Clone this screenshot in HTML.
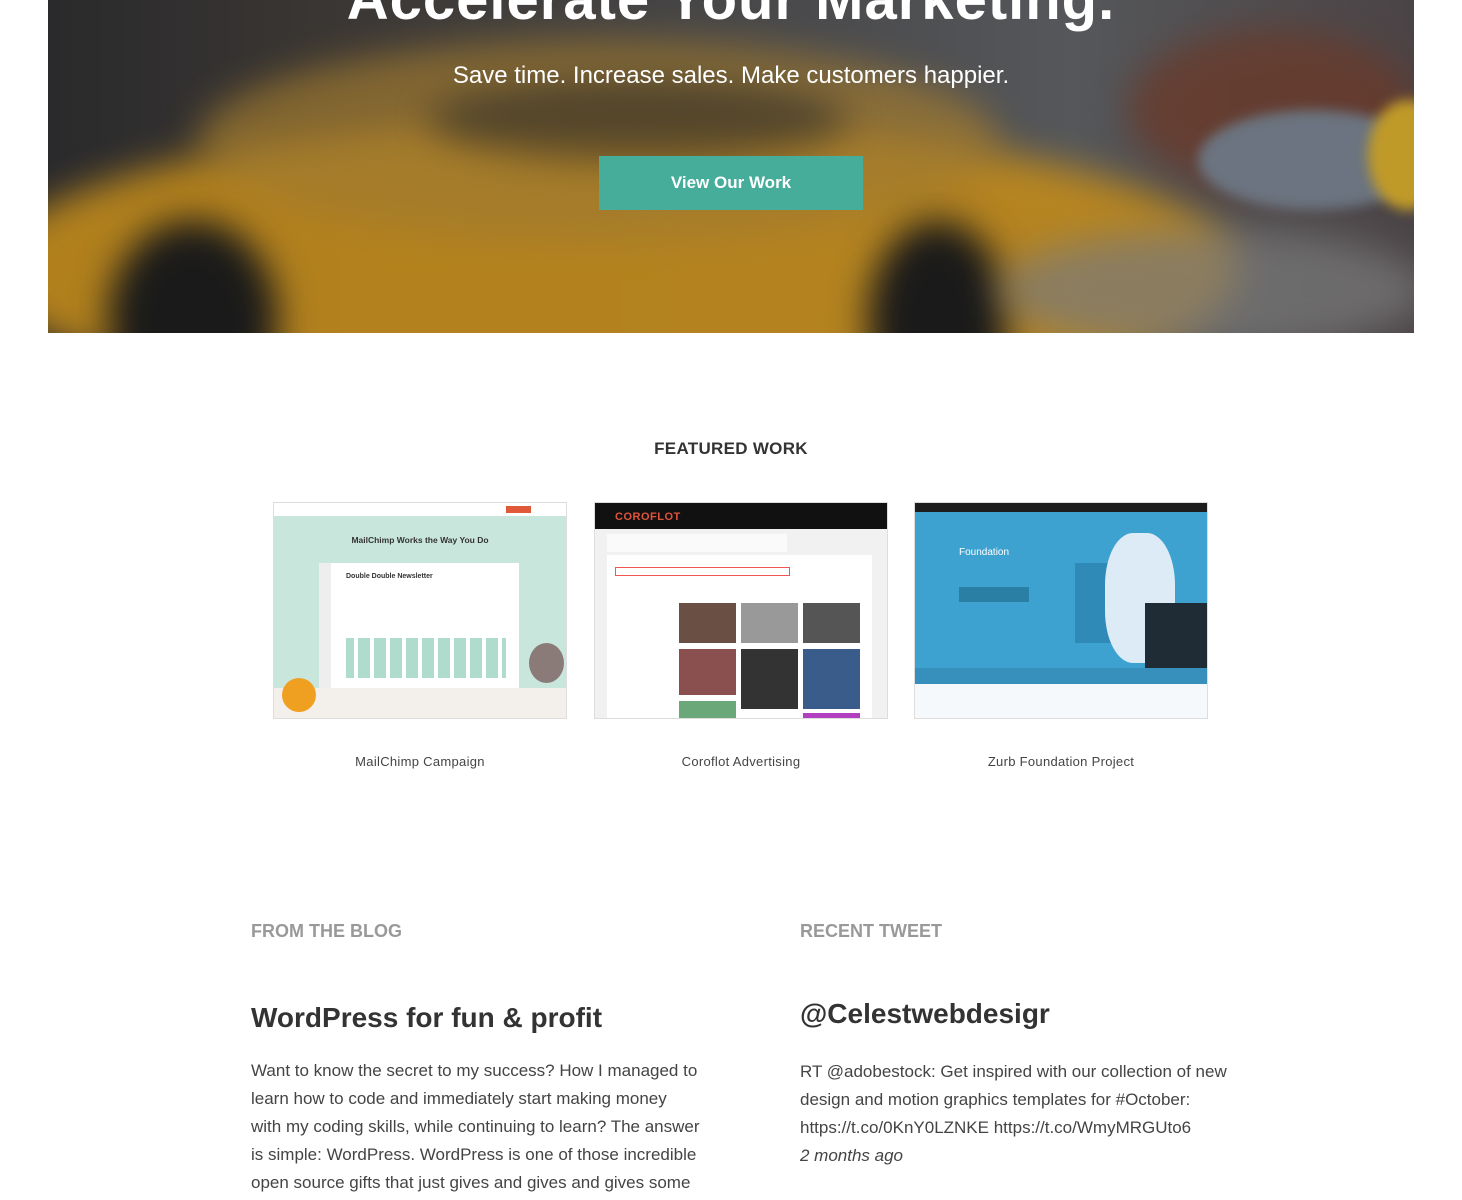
<!DOCTYPE html>
<html><head><meta charset="utf-8">
<style>
*{margin:0;padding:0;box-sizing:border-box}
body{width:1462px;height:1200px;overflow:hidden;background:#fff;font-family:"Liberation Sans",sans-serif;color:#333;position:relative}
.hero{position:absolute;left:48px;top:0;width:1366px;height:333px;overflow:hidden;
background:linear-gradient(90deg,#2a2a2c 0%,#3a3633 20%,#4a4a4c 55%,#55575a 75%,#4b4446 100%)}
.hero .b{position:absolute;border-radius:50%;filter:blur(18px)}
.h1{position:absolute;left:0;right:0;top:-34px;text-align:center;color:#fff;font-weight:bold;font-size:58px;letter-spacing:1px}
.sub{position:absolute;left:0;right:0;top:62px;text-align:center;color:#fff;font-size:24px}
.btn{position:absolute;left:551px;top:156px;width:264px;height:54px;background:#46ad9b;color:#fff;font-weight:bold;font-size:17px;text-align:center;line-height:54px}
h2.fw{position:absolute;left:0;width:1462px;top:439px;text-align:center;font-size:17px;font-weight:bold;color:#333;letter-spacing:.3px}
.th{position:absolute;top:502px;width:294px;height:217px;border:1px solid #ddd;overflow:hidden}
.cap{position:absolute;top:754px;width:294px;text-align:center;font-size:13px;color:#444;letter-spacing:.3px}
.lbl{position:absolute;top:921px;font-size:18px;font-weight:bold;color:#999}
.tt{position:absolute;font-size:28px;font-weight:bold;color:#333}
.p{position:absolute;font-size:17px;line-height:28px;color:#444;white-space:nowrap}
</style></head><body>
<div class="hero">
 <div class="b" style="left:-60px;top:120px;width:1250px;height:300px;background:#c08a1c;opacity:.9"></div>
 <div class="b" style="left:150px;top:40px;width:800px;height:200px;background:#a07a30;opacity:.7"></div>
 <div class="b" style="left:380px;top:80px;width:420px;height:80px;background:#2c2a28;opacity:.6"></div>
 <div class="b" style="left:60px;top:220px;width:170px;height:200px;background:#1a1a1a"></div>
 <div class="b" style="left:820px;top:220px;width:140px;height:200px;background:#1a1a1a"></div>
 <div class="b" style="left:1080px;top:30px;width:290px;height:160px;background:#6a3a2a;opacity:.8"></div>
 <div class="b" style="left:1150px;top:110px;width:230px;height:100px;background:#6b7480;filter:blur(6px)"></div>
 <div class="b" style="left:1320px;top:100px;width:80px;height:110px;background:#c09a28;filter:blur(6px)"></div>
 <div class="b" style="left:950px;top:230px;width:430px;height:120px;background:#7a7a7a;opacity:.7"></div>
 <div class="h1">Accelerate Your Marketing.</div>
 <div class="sub">Save time. Increase sales. Make customers happier.</div>
 <div class="btn">View Our Work</div>
</div>
<h2 class="fw">FEATURED WORK</h2>

<div class="th" style="left:273px;background:#c9e6dd">
 <div style="height:13px;background:#fff"></div>
 <div style="position:absolute;left:232px;top:3px;width:25px;height:7px;background:#e05a3a"></div>
 <div style="position:absolute;top:32px;width:100%;text-align:center;font-size:8.5px;font-weight:bold;color:#333">MailChimp Works the Way You Do</div>
 <div style="position:absolute;left:45px;top:60px;width:200px;height:126px;background:#fff;border-left:12px solid #eee"></div>
 <div style="position:absolute;left:72px;top:70px;font-size:7px;color:#333;font-weight:bold">Double Double Newsletter</div>
 <div style="position:absolute;left:72px;top:135px;width:160px;height:40px;background:linear-gradient(90deg,#a7d8c9 0 8px,#fff 8px 12px,#a7d8c9 12px 22px,#fff 22px 24px);background-size:16px 100%;opacity:.9"></div>
 <div style="position:absolute;left:0;top:185px;width:100%;height:32px;background:#f3f0ec"></div>
 <div style="position:absolute;left:8px;top:175px;width:34px;height:34px;border-radius:50%;background:#f0a020"></div>
 <div style="position:absolute;left:255px;top:140px;width:35px;height:40px;border-radius:50%;background:#8a7a78"></div>
</div>
<div class="th" style="left:594px;background:#f1f1f1">
 <div style="height:26px;background:#111;color:#e0533b;font-size:11px;font-weight:bold;padding:8px 0 0 20px;letter-spacing:.5px">COROFLOT</div>
 <div style="position:absolute;left:12px;top:31px;width:180px;height:18px;background:#fafafa"></div>
 <div style="position:absolute;left:12px;top:52px;width:265px;height:170px;background:#fff"></div>
 <div style="position:absolute;left:20px;top:64px;width:175px;height:9px;border:1px solid #e55"></div>
 <div style="position:absolute;left:84px;top:100px;width:57px;height:40px;background:#6a5044"></div>
 <div style="position:absolute;left:146px;top:100px;width:57px;height:40px;background:#999"></div>
 <div style="position:absolute;left:208px;top:100px;width:57px;height:40px;background:#555"></div>
 <div style="position:absolute;left:84px;top:146px;width:57px;height:46px;background:#8a5050"></div>
 <div style="position:absolute;left:146px;top:146px;width:57px;height:60px;background:#333"></div>
 <div style="position:absolute;left:208px;top:146px;width:57px;height:60px;background:#3a5c8a"></div>
 <div style="position:absolute;left:84px;top:198px;width:57px;height:20px;background:#6aa87a"></div>
 <div style="position:absolute;left:208px;top:210px;width:57px;height:10px;background:#b040c0"></div>
</div>
<div class="th" style="left:914px;background:#3ea2d0">
 <div style="height:9px;background:#1d1d1d"></div>
 <div style="position:absolute;left:44px;top:44px;color:#fff;font-size:10px">Foundation</div>
 <div style="position:absolute;left:44px;top:84px;width:70px;height:15px;background:#2a7fa5"></div>
 <div style="position:absolute;left:160px;top:60px;width:80px;height:80px;background:#2f8ab8"></div>
 <div style="position:absolute;left:190px;top:30px;width:70px;height:130px;border-radius:40%;background:#dcebf5"></div>
 <div style="position:absolute;left:230px;top:100px;width:62px;height:80px;background:#1f2c36"></div>
 <div style="position:absolute;left:0;top:165px;width:100%;height:16px;background:#3690bb"></div>
 <div style="position:absolute;left:0;top:181px;width:100%;height:40px;background:#f6f9fb"></div>
</div>
<div class="cap" style="left:273px">MailChimp Campaign</div>
<div class="cap" style="left:594px">Coroflot Advertising</div>
<div class="cap" style="left:914px">Zurb Foundation Project</div>

<div class="lbl" style="left:251px">FROM THE BLOG</div>
<div class="lbl" style="left:800px">RECENT TWEET</div>
<div class="tt" style="left:251px;top:1002px">WordPress for fun &amp; profit</div>
<div class="tt" style="left:800px;top:998px">@Celestwebdesigr</div>
<div class="p" style="left:251px;top:1057px">Want to know the secret to my success? How I managed to<br>learn how to code and immediately start making money<br>with my coding skills, while continuing to learn? The answer<br>is simple: WordPress. WordPress is one of those incredible<br>open source gifts that just gives and gives and gives some</div>
<div class="p" style="left:800px;top:1058px">RT @adobestock: Get inspired with our collection of new<br>design and motion graphics templates for #October:<br>https://t.co/0KnY0LZNKE https://t.co/WmyMRGUto6<br><i>2 months ago</i></div>
</body></html>
